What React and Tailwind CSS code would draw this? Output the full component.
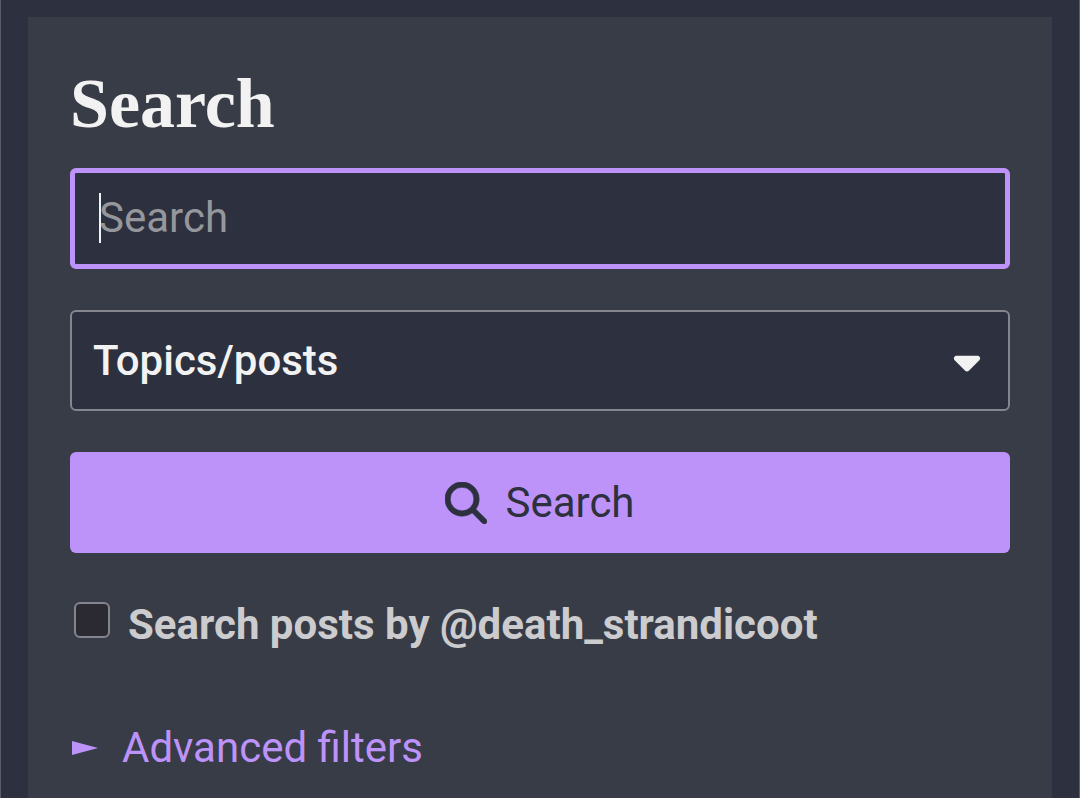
import { useState } from 'react'
import { FaCaretDown, FaMagnifyingGlass } from 'react-icons/fa6'

const searchTypes = [
  { value: 'topics_posts', label: 'Topics/posts' },
  { value: 'categories_tags', label: 'Categories/tags' },
  { value: 'users', label: 'Users' },
]

function SearchInput({ value, onChange }) {
  return (
    <div className="relative">
      <input
        type="text"
        aria-label="Search"
        placeholder="Search"
        value={value}
        onChange={(e) => onChange(e.target.value)}
        className="block w-full h-[101px] px-6 pb-[2px] bg-[#2d303e] text-[#f2f2f2] placeholder:text-[#96979c] border-5 border-[#bd93f9] rounded-md outline-none caret-transparent focus:caret-[#f2f2f2]"
      />
      {!value && (
        <span className="absolute left-[29px] top-[25px] w-[2px] h-[50px] bg-[#f2f2f2] pointer-events-none" />
      )}
    </div>
  )
}

function TypeSelect({ value, onChange }) {
  return (
    <div className="relative">
      <select
        aria-label="Search type"
        value={value}
        onChange={(e) => onChange(e.target.value)}
        className="block w-full h-[101px] pl-[21px] pr-20 bg-[#2d303e] text-[#f2f2f2] font-medium border-2 border-[#84858d] rounded-md appearance-none"
      >
        {searchTypes.map((type) => (
          <option key={type.value} value={type.value}>
            {type.label}
          </option>
        ))}
      </select>
      <FaCaretDown className="absolute right-[22px] top-[30px] size-[42px] text-[#f2f2f2] pointer-events-none" />
    </div>
  )
}

function App() {
  const [term, setTerm] = useState('')
  const [type, setType] = useState('topics_posts')
  const [onlyUser, setOnlyUser] = useState(false)

  return (
    <div className="min-h-screen flex flex-col pt-[17px] px-[27px] bg-[#2d303e] border-x border-[#5a5c68] font-['Roboto',sans-serif] text-[42px] leading-[50px]">
      <main className="flex-1 px-[42px] pt-[51px] bg-[#383c47]">
        <h1 className="font-['Liberation_Serif',serif] font-bold text-[70px] leading-[72px] text-[#f2f2f2]">
          Search
        </h1>

        <form className="mt-7 flex flex-col gap-[41px]" onSubmit={(e) => e.preventDefault()}>
          <SearchInput value={term} onChange={setTerm} />
          <TypeSelect value={type} onChange={setType} />
          <button
            type="submit"
            className="w-full h-[101px] flex items-center justify-center gap-[18px] bg-[#bd93f9] text-[#2d303e] rounded-md"
          >
            <FaMagnifyingGlass className="size-[42px] stroke-current [stroke-width:8]" />
            Search
          </button>
        </form>

        <label className="mt-[47px] px-1 flex items-start gap-[18px] font-bold text-[#cccccf]">
          <input
            type="checkbox"
            checked={onlyUser}
            onChange={(e) => setOnlyUser(e.target.checked)}
            className="mt-[2px] size-9 shrink-0 appearance-none bg-[#2b2a33] checked:bg-[#bd93f9] border-2 border-[#84858d] rounded-md"
          />
          Search posts by @death_strandicoot
        </label>

        <details className="mt-[73px]">
          <summary className="flex items-center gap-6 text-[#bd93f9] cursor-pointer">
            <svg className="ml-[2px] w-[26px] h-[14px]" viewBox="0 0 26 14" fill="currentColor">
              <path d="M0 0L26 7L0 14Z" />
            </svg>
            Advanced filters
          </summary>
        </details>
      </main>
    </div>
  )
}

export default App
